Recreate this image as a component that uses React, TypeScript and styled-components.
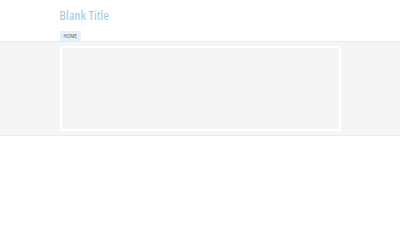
import * as React from 'react';
import styled, { createGlobalStyle } from 'styled-components';

const GlobalStyle = createGlobalStyle`
  html, body {
    margin: 0;
    padding: 0;
    background: #ffffff;
    font-family: "Open Sans", "Liberation Sans", sans-serif;
  }
`;

const Header = styled.header`
  width: 281px;
  margin: 0 auto;
  padding-top: 7px;
`;

const Title = styled.h1`
  margin: 0;
  font-family: "Open Sans", sans-serif;
  font-size: 13px;
  font-stretch: 75%;
  letter-spacing: 0.3px;
  font-weight: 400;
  line-height: 16px;
  color: #92c8ec;
`;

const Nav = styled.nav`
  display: flex;
  margin-top: 8px;
`;

const Tab = styled.a<{ active?: boolean }>`
  display: block;
  padding: 0 4px;
  height: 10px;
  line-height: 10px;
  font-size: 4.5px;
  color: #555;
  text-transform: uppercase;
  background: ${(props) => (props.active ? '#e3f1fa' : 'transparent')};
`;

const Band = styled.div`
  background: #f5f5f5;
  border-top: 1px solid #ebebeb;
  border-bottom: 1px solid #ebebeb;
  padding: 4px 0 4px;
`;

const Panel = styled.div`
  width: 277px;
  height: 81px;
  margin: 0 auto;
  border: 2px solid #ffffff;
  background: #f4f4f4;
`;

const App: React.FC = () => {
  return (
    <>
      <GlobalStyle />
      <Header>
        <Title>Blank Title</Title>
        <Nav>
          <Tab active>Home</Tab>
        </Nav>
      </Header>
      <Band>
        <Panel />
      </Band>
    </>
  );
};

export default App;
